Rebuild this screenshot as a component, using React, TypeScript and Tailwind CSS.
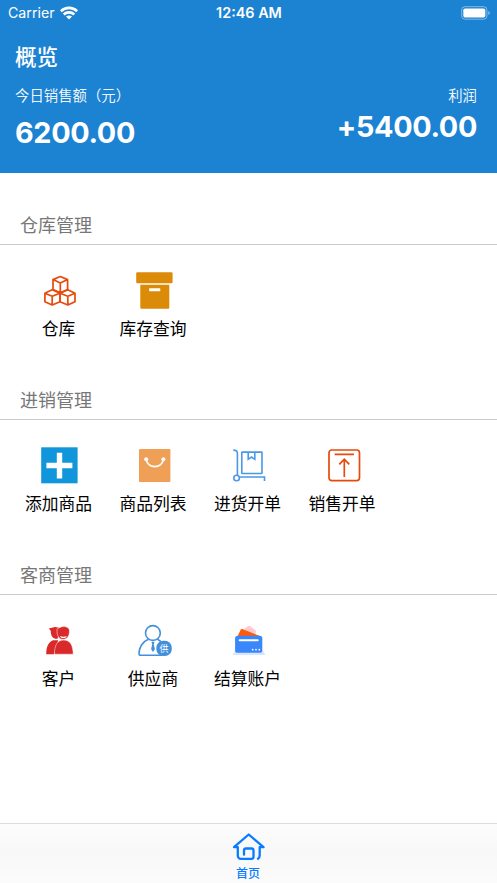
import React from 'react';

// --- Types ---
interface MenuItem {
  label: string;
  icon: React.ReactNode;
}

interface MenuSection {
  title: string;
  items: MenuItem[];
}

// --- Icons ---
const Icon = ({ children }: { children: React.ReactNode }) => (
  <svg width="40" height="40" viewBox="0 0 40 40" fill="none" className="block shrink-0">
    {children}
  </svg>
);

const CubesIcon = () => (
  <Icon>
    <g stroke="#e64a0c" strokeWidth="1.7" strokeLinejoin="round">
      <path d="M21.3 6.5 28.6 9.6v10L21.3 22.8l-7.3-3.2v-10zM14 9.6l7.3 3.3 7.300-3.300M21.300 12.900v10" />
      <path d="M13.200 19.700 21 23.200v8.500l-7.800 3.300-7.300-3.300v-8.500zM5.900 23.200l7.300 3.100 7.800-3.100M13.200 26.300v8.700" />
      <path d="M28.800 19.700 36 23.200v8.500l-7.200 3.300-7.800-3.300v-8.500zM21 23.200l7.800 3.100 7.200-3.100M28.800 26.300v8.700" />
    </g>
  </Icon>
);

const ArchiveIcon = () => (
  <Icon>
    <rect x="2.2" y="2.2" width="36.4" height="11" rx="1.2" fill="#dc8b08" />
    <path d="M6.3 14.8h29v22.7a1.2 1.2 0 0 1-1.2 1.2H7.5a1.2 1.2 0 0 1-1.2-1.2z" fill="#dc8b08" />
    <rect x="15.1" y="18.3" width="11.2" height="2.9" rx="0.6" fill="#fff" />
  </Icon>
);

const AddIcon = () => (
  <Icon>
    <rect x="2.2" y="2.3" width="36.4" height="36" fill="#1296db" />
    <path d="M7.4 20.5h26M20.5 7.7v25.7" stroke="#fff" strokeWidth="5.4" />
  </Icon>
);

const BagIcon = () => (
  <Icon>
    <rect x="5" y="4.1" width="31.4" height="33" rx="1.2" fill="#f0a056" />
    <circle cx="12.2" cy="14.2" r="2" fill="#fff" />
    <circle cx="29.4" cy="14.2" r="2" fill="#fff" />
    <path d="M12.2 14.2c1.5 10 15.7 10 17.2 0" stroke="#fff" strokeWidth="1.7" />
  </Icon>
);

const TrolleyIcon = () => (
  <Icon>
    <g stroke="#4a98e6" strokeWidth="1.6">
      <path d="M5.3 5.1c2.5 0 4.1 1 4.1 3.2V30" />
      <circle cx="8.6" cy="33" r="2.8" />
      <path d="M11.5 32h25v4" />
      <rect x="13.8" y="7.1" width="20.2" height="21.4" rx="0.5" />
      <path d="M20.2 7.3v7l3.3-2.3 3.3 2.3v-7" />
    </g>
  </Icon>
);

const SalesIcon = () => (
  <Icon>
    <g stroke="#e64a0c" strokeWidth="1.7">
      <rect x="6" y="5" width="30.5" height="30.6" rx="2.8" />
      <path d="M11.6 9.4h19.3M21.3 32V14M16.3 19.4l5-5.2 5 5.2" />
    </g>
  </Icon>
);

const CustomerIcon = () => (
  <Icon>
    <path d="M9.8 8.5 16 6.9l4.3.8-1.6 11c-4 .8-7-2-7-8zM7.2 34.2c.1-7 1.8-12.2 7-14h5L15 34.2z" fill="#d9292b" />
    <path d="M18 9 22 6.9c5.6-1.2 9 1.2 8.4 5.3-.4 4.5-2.800 7.100-6.300 7.100-3.600 0-5.800-2.600-6.100-7.400zM15.400 34.200c.1-8.600 2.600-14.100 9.300-14.100s9.300 5.500 9.500 14.100z" fill="#d9292b" stroke="#fff" strokeWidth="0.5" />
    <path d="M21 15.900c2.200 1 4.500 1 6.700 0-.7 2.900-6 2.900-6.700 0z" fill="#fff" />
  </Icon>
);

const SupplierIcon = () => (
  <Icon>
    <g stroke="#4290dc" strokeWidth="1.6">
      <circle cx="18.9" cy="13" r="7.4" />
      <path d="M14.5 19.2C8.5 21.5 5 27.5 5 33.5c0 1.2.6 1.8 1.8 1.8H28M23.3 19.2l3.5 2.3" />
    </g>
    <path d="m17.5 22.3 1.5-.8 1.5.8-.7 2 1.1 5-1.9 2.8-1.9-2.8 1.1-5z" fill="#4290dc" />
    <rect x="22.3" y="20.7" width="15.5" height="15.3" rx="7" fill="#4290dc" />
    <text x="30" y="31.6" textAnchor="middle" fontSize="9" fill="#fff" fontFamily="'Noto Sans CJK SC', sans-serif">供</text>
  </Icon>
);

const CardIcon = () => (
  <Icon>
    <path d="m16 9 4.3-3q1-.6 2 .2l5.500 4.200V17z" fill="#ffc9cd" />
    <path d="m9.300 17 3.300-7.200q.5-1.100 1.800-.7L32 16v2z" fill="#fc5a0c" />
    <path d="M6.800 30.500h28l2.500 4.400H4.700z" fill="#d7e5ff" />
    <rect x="7.1" y="15.8" width="27.2" height="17" rx="2.6" fill="#3a87fa" />
    <path d="M11.7 20.3h18" stroke="#fff" strokeWidth="2.1" strokeLinecap="round" />
    <path d="M24.7 29.7h0M28 29.7h0M31.3 29.7h0" stroke="#fff" strokeWidth="1.7" strokeLinecap="round" />
  </Icon>
);

const HomeIcon = () => (
  <svg width="34" height="30" viewBox="0 0 34 30" fill="none" stroke="#087cff" strokeWidth="2.3" strokeLinecap="round" strokeLinejoin="round">
    <path d="M12 22.7V18.5a2 2 0 0 1 2-2h5.5a2 2 0 0 1 2 2v6.3a2 2 0 0 1-2 2H8.8a3 3 0 0 1-3-3V15.2H2L16.7 2.500 31.500 15.200h-3.800v8.300q0 2.200-1.700 3.200" />
  </svg>
);

const sections: MenuSection[] = [
  {
    title: '仓库管理',
    items: [
      { label: '仓库', icon: <CubesIcon /> },
      { label: '库存查询', icon: <ArchiveIcon /> },
    ],
  },
  {
    title: '进销管理',
    items: [
      { label: '添加商品', icon: <AddIcon /> },
      { label: '商品列表', icon: <BagIcon /> },
      { label: '进货开单', icon: <TrolleyIcon /> },
      { label: '销售开单', icon: <SalesIcon /> },
    ],
  },
  {
    title: '客商管理',
    items: [
      { label: '客户', icon: <CustomerIcon /> },
      { label: '供应商', icon: <SupplierIcon /> },
      { label: '结算账户', icon: <CardIcon /> },
    ],
  },
];

// --- Status bar ---
const StatusBar = () => (
  <div className="grid h-[25px] grid-cols-3 items-center pr-[7px] pl-2">
    <div className="flex items-center gap-[5px]">
      <span className="pt-px text-[14.2px] leading-6">Carrier</span>
      <svg width="18" height="14" viewBox="0 0 18 14" fill="none" stroke="#fff" strokeWidth="2.6">
        <path d="M.8 5.2a11.8 11.8 0 0 1 16.4 0M3.7 8.5a7.7 7.7 0 0 1 10.6 0" />
        <path d="M6 10.6q3-2.3 6 0l-3 3z" fill="#fff" stroke="none" />
      </svg>
    </div>
    <span className="pt-px text-center text-[14.4px] leading-6 font-semibold whitespace-nowrap">12:46 AM</span>
    <svg width="29" height="14" viewBox="0 0 29 14" fill="none" className="justify-self-end">
      <rect x="0.7" y="0.7" width="25.2" height="12.5" rx="3.2" stroke="#fff" strokeOpacity="0.45" />
      <rect x="2.3" y="2.4" width="22" height="9.2" rx="1.8" fill="#fff" />
      <path d="M27.3 5v4q1.5-.6 1.5-2t-1.5-2z" fill="#fff" fillOpacity="0.5" />
    </svg>
  </div>
);

// --- Menu section ---
const Section = ({ title, items }: MenuSection) => (
  <section className="h-[175px]">
    <h2 className="flex h-[41px] items-center border-b border-[#cbcbcb] pt-[2px] pl-5 text-[18px] text-[#777777]">{title}</h2>
    <div className="flex pt-[25px] pl-[11.75px]">
      {items.map((item) => (
        <div key={item.label} className="flex w-[94.5px] flex-col items-center">
          {item.icon}
          <span className="mt-[7px] mr-px text-[16.8px] leading-6 whitespace-nowrap text-black">{item.label}</span>
        </div>
      ))}
    </div>
  </section>
);

// --- Main App ---
export default function App() {
  return (
    <div className="flex h-[883px] w-[497px] flex-col overflow-hidden bg-white font-[Inter,'Noto_Sans_CJK_SC',sans-serif]">
      <header className="h-[173px] shrink-0 bg-[#1c82d2] text-white">
        <StatusBar />
        <h1 className="mt-[16px] pl-[15px] text-[21.6px] leading-8 font-medium">概览</h1>
        <div className="mt-[12px] flex justify-between pr-5 pl-[15px]">
          <div>
            <p className="text-[14.4px] leading-[22px] text-white/95">今日销售额（元）</p>
            <p className="mt-[8px] text-[28.8px] leading-9 font-bold tracking-[-0.35px]">6200.00</p>
          </div>
          <div className="text-right">
            <p className="text-[14.4px] leading-[22px] text-white/95">利润</p>
            <p className="mt-[2px] text-[28.8px] leading-9 font-bold tracking-[-0.35px]">+5400.00</p>
          </div>
        </div>
      </header>

      <main className="flex-1 pt-[31px]">
        {sections.map((section) => (
          <Section key={section.title} {...section} />
        ))}
      </main>

      <nav className="flex h-[60px] shrink-0 flex-col items-center border-t border-[#dcdcdc] bg-linear-to-b from-[#fcfcfc] via-[#f8f8f8] to-[#fbfbfb] pt-2 text-[#087cff]">
        <HomeIcon />
        <span className="mt-1 mr-px text-[12px] leading-4 font-medium">首页</span>
      </nav>
    </div>
  );
}
